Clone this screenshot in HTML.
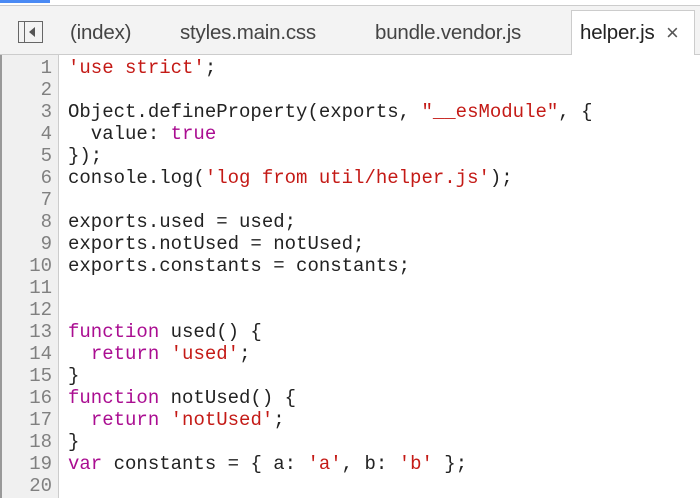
<!DOCTYPE html>
<html><head><style>
body{margin:0;width:700px;height:498px;overflow:hidden;background:#fff;position:relative;font-family:"Liberation Sans",sans-serif}
.blue{position:absolute;left:0;top:0;width:50px;height:3px;background:#4a8af4}
.bar{position:absolute;left:0;top:5px;width:700px;height:50px;background:#f3f3f3;border-top:1px solid #ccc;border-bottom:1px solid #ccc;box-sizing:border-box}
.tab{position:absolute;top:21px;font-size:20.5px;color:#444;letter-spacing:-0.2px}
.active{position:absolute;left:571px;top:10px;width:124px;height:45px;background:#fff;border:1px solid #ccc;border-bottom:none;box-sizing:border-box}
.gut{position:absolute;left:0;top:55px;width:59px;height:443px;background:#f0f0f0;border-right:1px solid #ccc;border-left:2px solid #999;box-sizing:border-box}
pre{margin:0;position:absolute;top:57px;font-family:"Liberation Mono",monospace;font-size:19px;line-height:22px}
.nums{left:0;width:52px;text-align:right;color:#808080}
.code{left:68px;color:#222}
.s{color:#c41a16}.k{color:#aa0d91}
</style></head><body>
<div class="blue"></div>
<div class="bar"></div>
<div class="active"></div>
<svg style="position:absolute;left:18px;top:21px" width="26" height="24" viewBox="0 0 26 24"><rect x="0.5" y="0.5" width="24" height="21" fill="none" stroke="#666"/><line x1="6.5" y1="0" x2="6.5" y2="22" stroke="#666"/><path d="M17 6 L11 11 L17 16 Z" fill="#555"/></svg>
<div class="tab" style="left:70px">(index)</div>
<div class="tab" style="left:180px">styles.main.css</div>
<div class="tab" style="left:375px">bundle.vendor.js</div>
<div class="tab" style="left:580px;color:#222">helper.js</div>
<div class="tab" style="left:666px;color:#555;font-size:22px;top:20px">×</div>
<div class="gut"></div>
<pre class="nums">1
2
3
4
5
6
7
8
9
10
11
12
13
14
15
16
17
18
19
20</pre>
<pre class="code"><span class="s">'use strict'</span>;

Object.defineProperty(exports, <span class="s">"__esModule"</span>, {
  value: <span class="k">true</span>
});
console.log(<span class="s">'log from util/helper.js'</span>);

exports.used = used;
exports.notUsed = notUsed;
exports.constants = constants;


<span class="k">function</span> used() {
  <span class="k">return</span> <span class="s">'used'</span>;
}
<span class="k">function</span> notUsed() {
  <span class="k">return</span> <span class="s">'notUsed'</span>;
}
<span class="k">var</span> constants = { a: <span class="s">'a'</span>, b: <span class="s">'b'</span> };
</pre>
</body></html>
